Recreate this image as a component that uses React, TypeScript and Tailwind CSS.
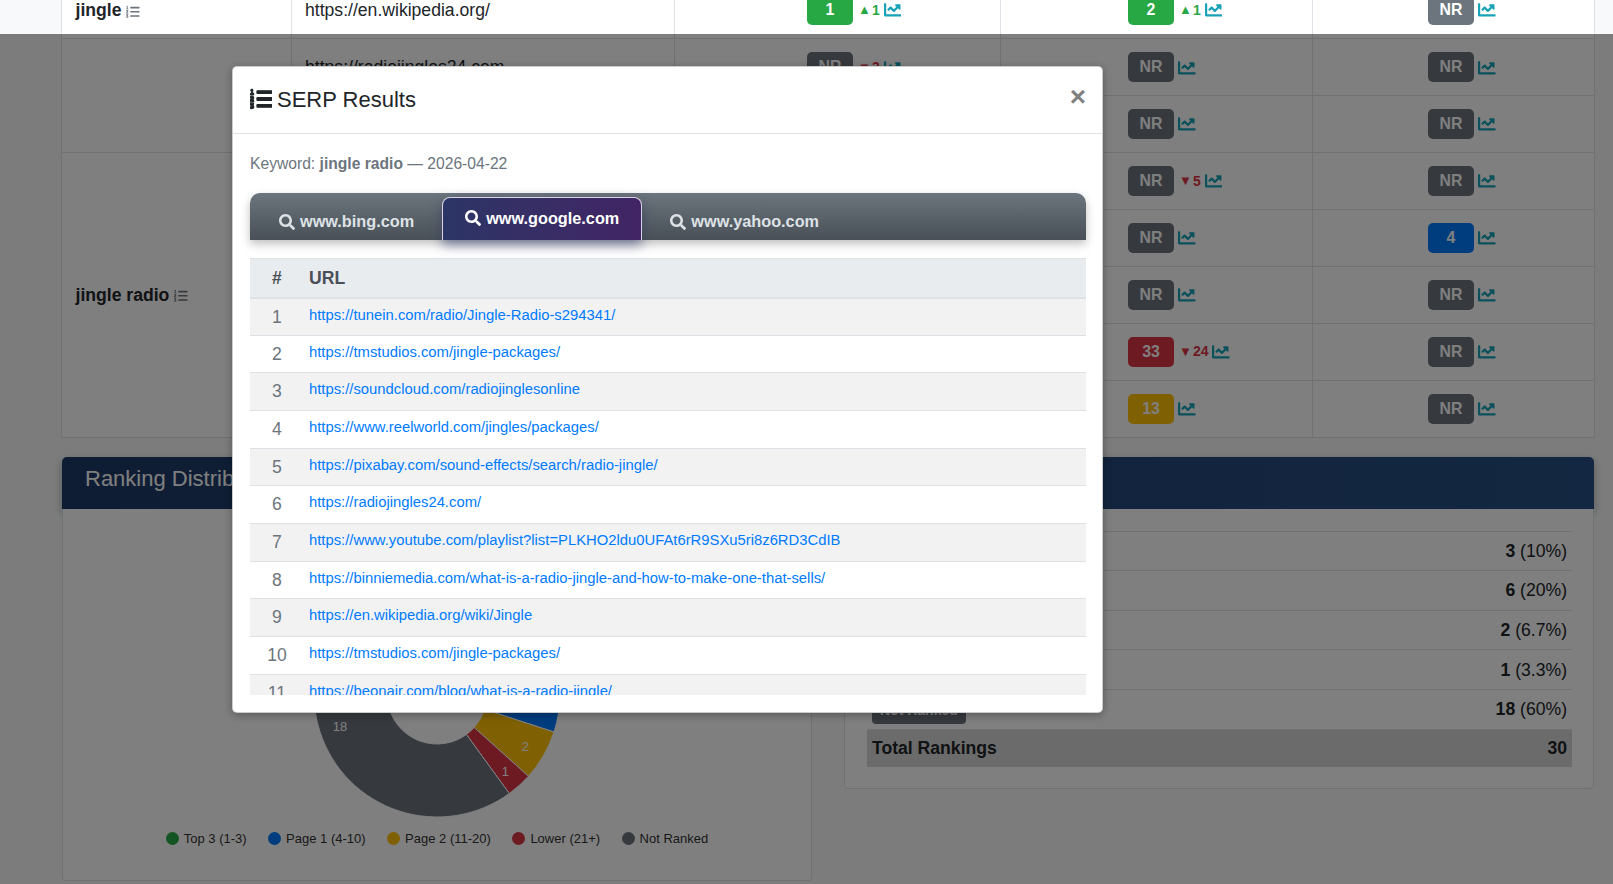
import { FaChartLine, FaListOl, FaSearch } from "react-icons/fa";

type Cell = { label: string; tone: string; delta?: string; dir?: "up" | "down" };

const NR: Cell = { label: "NR", tone: "bg-[#6c757d]" };
const GREEN = "bg-[#28a745]";

const rows: { url: string; cells: Cell[] }[] = [
  { url: "https://en.wikipedia.org/", cells: [{ label: "1", tone: GREEN, delta: "1", dir: "up" }, { label: "2", tone: GREEN, delta: "1", dir: "up" }, NR] },
  { url: "https://radiojingles24.com", cells: [{ ...NR, delta: "3", dir: "down" }, NR, NR] },
  { url: "", cells: [NR, NR, NR] },
  { url: "", cells: [NR, { ...NR, delta: "5", dir: "down" }, NR] },
  { url: "", cells: [NR, NR, { label: "4", tone: "bg-[#007bff]" }] },
  { url: "", cells: [NR, NR, NR] },
  { url: "", cells: [NR, { label: "33", tone: "bg-[#dc3545]", delta: "24", dir: "down" }, NR] },
  { url: "", cells: [NR, { label: "13", tone: "bg-[#ffc107]" }, NR] },
];

const serp = [
  "https://tunein.com/radio/Jingle-Radio-s294341/",
  "https://tmstudios.com/jingle-packages/",
  "https://soundcloud.com/radiojinglesonline",
  "https://www.reelworld.com/jingles/packages/",
  "https://pixabay.com/sound-effects/search/radio-jingle/",
  "https://radiojingles24.com/",
  "https://www.youtube.com/playlist?list=PLKHO2ldu0UFAt6rR9SXu5ri8z6RD3CdIB",
  "https://binniemedia.com/what-is-a-radio-jingle-and-how-to-make-one-that-sells/",
  "https://en.wikipedia.org/wiki/Jingle",
  "https://tmstudios.com/jingle-packages/",
  "https://beonair.com/blog/what-is-a-radio-jingle/",
];

const dist = [
  { label: "Top 3 (1-3)", count: 3, pct: "10%", color: "#28a745", badge: "bg-[#28a745]" },
  { label: "Page 1 (4-10)", count: 6, pct: "20%", color: "#007bff", badge: "bg-[#007bff]" },
  { label: "Page 2 (11-20)", count: 2, pct: "6.7%", color: "#ffc107", badge: "bg-[#ffc107]" },
  { label: "Lower (21+)", count: 1, pct: "3.3%", color: "#dc3545", badge: "bg-[#dc3545]" },
  { label: "Not Ranked", count: 18, pct: "60%", color: "#6c757d", badge: "bg-[#6c757d]" },
];

function RankCell({ cell, pad }: { cell: Cell; pad: string }) {
  return (
    <td className={`border-l border-[#dee2e6] ${pad}`}>
      <div className="flex items-center">
        <span className={`${cell.tone} flex h-[30px] min-w-[46px] items-center justify-center rounded-[5px] px-2 text-[15.84px] font-bold text-white`}>{cell.label}</span>
        {cell.delta && (
          <span className={`ml-[5px] flex items-center gap-[1px] text-[14px] font-bold ${cell.dir === "up" ? "text-[#28a745]" : "text-[#dc3545]"}`}>
            <span className="text-[13px]">{cell.dir === "up" ? "▲" : "▼"}</span>{cell.delta}
          </span>
        )}
        <FaChartLine className="ml-1 text-[17.6px] text-[#17a2b8]" />
      </div>
    </td>
  );
}

function Donut() {
  const cx = 123;
  const cy = 123;
  const R = 123;
  const r = 50;
  let acc = 0;
  const pt = (rad: number, a: number) => `${cx + rad * Math.sin(a)} ${cy - rad * Math.cos(a)}`;
  return (
    <svg width="246" height="246" viewBox="0 0 246 246">
      {dist.map((d) => {
        const a0 = (acc / 30) * Math.PI * 2;
        acc += d.count;
        const a1 = (acc / 30) * Math.PI * 2;
        const large = a1 - a0 > Math.PI ? 1 : 0;
        const mid = (a0 + a1) / 2;
        const lr = 102;
        return (
          <g key={d.label}>
            <path d={`M${pt(R, a0)} A${R} ${R} 0 ${large} 1 ${pt(R, a1)} L${pt(r, a1)} A${r} ${r} 0 ${large} 0 ${pt(r, a0)} Z`} fill={d.color} stroke="#fff" strokeWidth="1" />
            <text x={cx + lr * Math.sin(mid)} y={cy + 2.5 - lr * Math.cos(mid)} fill="#fff" fontSize="13" textAnchor="middle" dominantBaseline="middle">{d.count}</text>
          </g>
        );
      })}
    </svg>
  );
}

function SerpModal() {
  return (
    <div className="h-[647px] w-[871px] overflow-hidden rounded-[5px] border border-black/20 bg-white shadow-[0_2px_8px_rgba(0,0,0,0.3)]">
      <div className="flex h-[67px] items-center justify-between border-b border-[#dee2e6] pr-[16px] pl-[17px]">
        <h5 className="flex items-center pb-[2px] text-[22px] text-[#212529]">
          <FaListOl className="mr-[5px] text-[22px]" stroke="currentColor" strokeWidth="24" />
          SERP Results
        </h5>
        <span className="-mt-[7px] text-[28px] leading-none font-bold text-black/50">×</span>
      </div>
      <div className="pr-[16px] pl-[17px] pt-[20px]">
        <p className="h-[39px] text-[15.65px] leading-[20px] text-[#6c757d]">
          Keyword: <strong>jingle radio</strong> — 2026-04-22
        </p>
        <div className="flex h-[47px] items-end gap-[6px] rounded-t-[10px] bg-gradient-to-b from-[#6c757d] to-[#495057] px-[7px] shadow-[0_4px_10px_rgba(0,0,0,0.25)]">
          <div className="flex h-[43px] items-center gap-[5px] px-[22px] pt-[6px] text-[16.28px] font-bold text-[#dee2e6]"><FaSearch className="text-[16px]" />www.bing.com</div>
          <div className="flex h-[43px] items-center gap-[5px] rounded-t-[8px] border border-b-0 border-white/80 bg-gradient-to-r from-[#2c3566] to-[#412465] px-[22px] pb-[2px] text-[16.28px] font-bold text-white shadow-[0_5px_12px_rgba(44,53,102,0.55)]"><FaSearch className="text-[16px]" />www.google.com</div>
          <div className="flex h-[43px] items-center gap-[5px] px-[22px] pt-[6px] text-[16.28px] font-bold text-[#dee2e6]"><FaSearch className="text-[16px]" />www.yahoo.com</div>
        </div>
        <div className="mt-[18px] h-[437px] overflow-hidden">
          <table className="w-full table-fixed border-collapse">
            <thead>
              <tr className="h-[39px] border-t border-b-2 border-[#dee2e6] bg-[#e9ecef] text-[#495057]">
                <th className="w-[59px] pr-[5px] text-center text-[17.6px] font-bold">#</th>
                <th className="text-left text-[17.6px] font-bold">URL</th>
              </tr>
            </thead>
            <tbody>
              {serp.map((url, i) => (
                <tr key={i} className={`h-[37.67px] border-b border-[#dee2e6] ${i % 2 === 0 ? "bg-[#f2f2f2]" : "bg-white"}`}>
                  <td className="pr-[5px] pt-[5px] text-center align-top text-[17.6px] leading-[26px] text-[#6c757d]">{i + 1}</td>
                  <td className="pt-[5px] align-top text-[14.82px] leading-[22px]"><a className="text-[#007bff]">{url}</a></td>
                </tr>
              ))}
            </tbody>
          </table>
        </div>
      </div>
    </div>
  );
}

export default function App() {
  return (
    <div className="relative h-[884px] overflow-hidden bg-[#f8f9fa] font-['Liberation_Sans',sans-serif] text-[17.6px] text-[#212529]">
      <div className="-mt-[18px] ml-[61px]">
        <table className="w-[1533px] table-fixed border-collapse border-r border-[#dee2e6] bg-white">
          <colgroup>
            <col className="w-[230px]" />
            <col className="w-[383px]" />
            <col className="w-[326px]" />
            <col className="w-[312px]" />
            <col className="w-[282px]" />
          </colgroup>
          <tbody>
            {rows.map((row, i) => (
              <tr key={i} className="h-[56.9px] border-b border-[#dee2e6]">
                {i === 0 && (
                  <td className="border-l border-[#dee2e6] pr-[13px] pl-[13.5px] font-bold">
                    jingle <FaListOl className="inline text-[13.5px] text-[#6c757d]" />
                  </td>
                )}
                {i === 1 && <td rowSpan={2} className="border-l border-[#dee2e6]" />}
                {i === 3 && (
                  <td rowSpan={5} className="border-l border-t border-[#dee2e6] pr-[13px] pl-[13.5px] font-bold">
                    jingle radio <FaListOl className="inline text-[13.5px] text-[#6c757d]" />
                  </td>
                )}
                <td className="border-l border-[#dee2e6] px-[13px]">{row.url}</td>
                <RankCell cell={row.cells[0]} pad="pl-[132px]" />
                <RankCell cell={row.cells[1]} pad="pl-[127px]" />
                <RankCell cell={row.cells[2]} pad="pl-[115px]" />
              </tr>
            ))}
          </tbody>
        </table>

        <div className="mt-[19px] ml-[1px] h-[52px] w-[1532px] rounded-t-[5px] bg-gradient-to-r from-[#1e3a68] to-[#284f84] px-[23px] pt-[5px] text-[22px] text-white shadow-[0_4px_10px_rgba(0,0,0,0.3)]">
          Ranking Distribution
        </div>

        <div className="ml-[1px] flex w-[1532px] items-start gap-[32px]">
          <div className="h-[372px] w-[750px] rounded-b-[4px] border border-t-0 border-[#dee2e6] bg-white pt-[62px]">
            <div className="flex justify-center"><Donut /></div>
            <div className="mt-[12px] flex justify-center gap-[21.5px] text-[13px] text-[#333]">
              {dist.map((d) => (
                <span key={d.label} className="flex items-center gap-[5px]">
                  <span className={`h-[13px] w-[13px] rounded-full ${d.badge}`} />
                  {d.label}
                </span>
              ))}
            </div>
          </div>

          <div className="h-[280px] w-[750px] rounded-b-[4px] border border-t-0 border-[#dee2e6] bg-white pr-[21px] pl-[22px] pt-[22px]">
            <div className="border-b border-[#dee2e6]">
              {dist.map((d) => (
                <div key={d.label} className="flex h-[39.6px] items-center justify-between border-t border-[#dee2e6] px-[5px]">
                  <span className={`${d.badge} rounded-[4px] px-2 pt-[6px] pb-[4px] text-[14px] leading-[19px] font-bold text-white`}>{d.label}</span>
                  <span><strong>{d.count}</strong> ({d.pct})</span>
                </div>
              ))}
            </div>
            <div className="flex h-[37px] items-center justify-between bg-[#d6d6d6] px-[5px] font-bold">
              <span>Total Rankings</span>
              <span>30</span>
            </div>
          </div>
        </div>
      </div>

      <div className="absolute inset-x-0 top-[34px] bottom-0 bg-black/50 pl-[232px] pt-[32px]">
        <SerpModal />
      </div>
    </div>
  );
}
